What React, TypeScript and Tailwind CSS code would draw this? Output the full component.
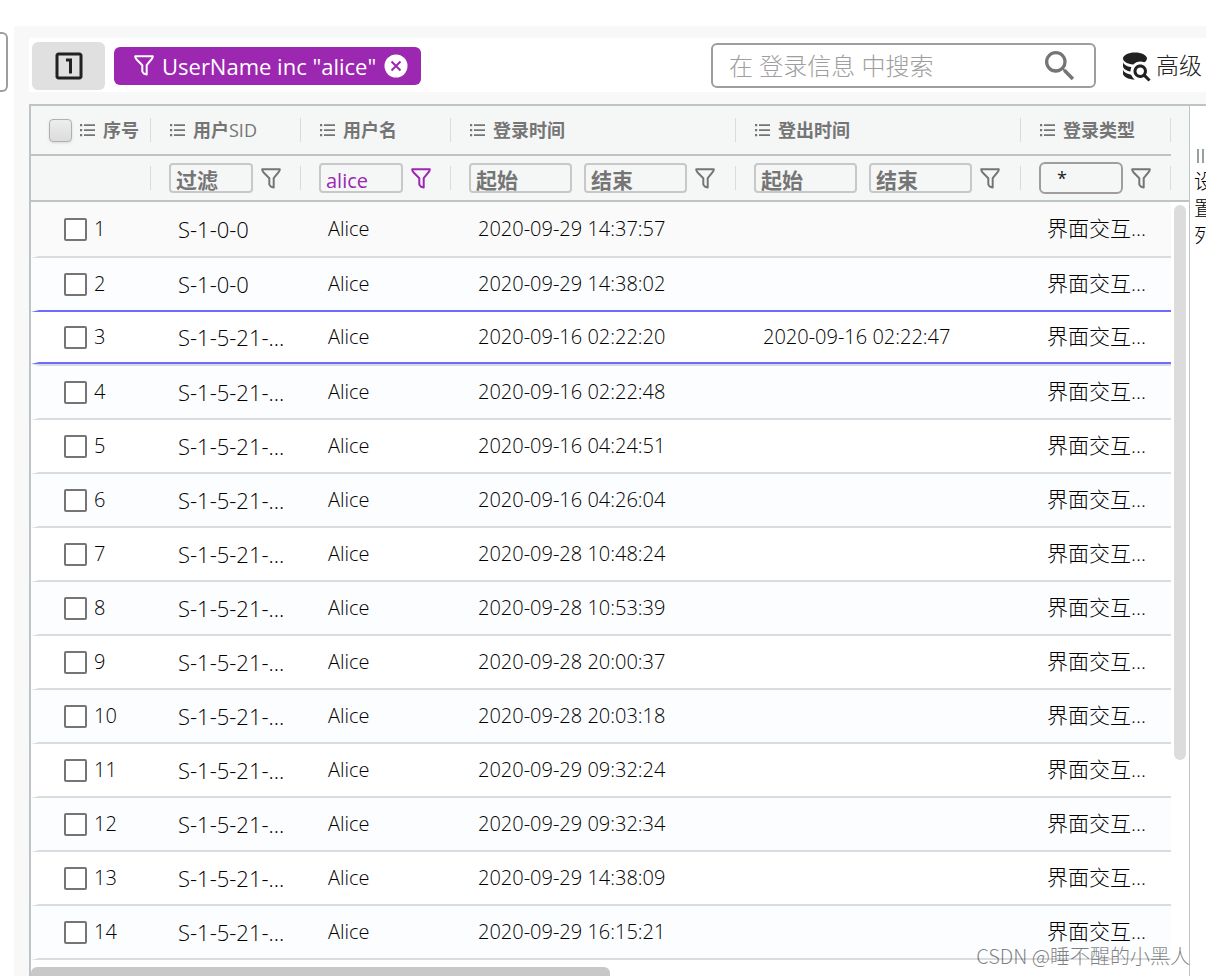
import React from 'react';
import { MdOutlineLooksOne, MdSearch } from 'react-icons/md';

interface LoginRecord {
    id: number;
    sid: string;
    login: string;
    logout?: string;
}

const LONG_SID = 'S-1-5-21-...';
const SELECTED_ID = 3;

const records: LoginRecord[] = [
    { id: 1, sid: 'S-1-0-0', login: '2020-09-29 14:37:57' },
    { id: 2, sid: 'S-1-0-0', login: '2020-09-29 14:38:02' },
    { id: 3, sid: LONG_SID, login: '2020-09-16 02:22:20', logout: '2020-09-16 02:22:47' },
    { id: 4, sid: LONG_SID, login: '2020-09-16 02:22:48' },
    { id: 5, sid: LONG_SID, login: '2020-09-16 04:24:51' },
    { id: 6, sid: LONG_SID, login: '2020-09-16 04:26:04' },
    { id: 7, sid: LONG_SID, login: '2020-09-28 10:48:24' },
    { id: 8, sid: LONG_SID, login: '2020-09-28 10:53:39' },
    { id: 9, sid: LONG_SID, login: '2020-09-28 20:00:37' },
    { id: 10, sid: LONG_SID, login: '2020-09-28 20:03:18' },
    { id: 11, sid: LONG_SID, login: '2020-09-29 09:32:24' },
    { id: 12, sid: LONG_SID, login: '2020-09-29 09:32:34' },
    { id: 13, sid: LONG_SID, login: '2020-09-29 14:38:09' },
    { id: 14, sid: LONG_SID, login: '2020-09-29 16:15:21' },
];

const FunnelIcon = () => (
    <svg viewBox="0 0 20 21" fill="none" stroke="currentColor" strokeWidth="2" strokeLinejoin="round" className="h-[21px] w-5 shrink-0">
        <path d="M1.2 1.2h17.6c0 1.4-.4 2-1.2 3L12.700 10.200v9.300l-3-1-1.400-2V10.200L2.400 4.200c-.8-1-1.200-1.600-1.200-3z" />
    </svg>
);

const ListIcon = () => (
    <svg viewBox="0 0 15 13" fill="currentColor" className="h-[13px] w-[15px] shrink-0">
        <path d="M0 0h2.200v2.200H0zM0 5h2.200v2.200H0zM0 10h2.200v2.200H0zM4 .3h11v1.600H4zM4 5.300h11v1.600H4zM4 10.300h11v1.600H4z" />
    </svg>
);

const CloseIcon = () => (
    <svg viewBox="0 0 24 24" className="size-6">
        <circle cx="12" cy="12" r="11.5" fill="#fff" />
        <path d="M7.500 7.500l9 9M16.500 7.500l-9 9" stroke="#9c27b0" strokeWidth="2" />
    </svg>
);

const DatabaseSearchIcon = () => (
    <svg viewBox="0 0 24 24" fill="currentColor" className="size-9 shrink-0">
        <path d="M18.68,12.32C16.92,10.56 14.07,10.57 12.32,12.33C10.56,14.09 10.56,16.94 12.32,18.69C13.81,20.17 16.11,20.43 17.89,19.32L21,22.39L22.39,21L19.3,17.89C20.43,16.12 20.17,13.8 18.68,12.32M17.27,17.27C16.29,18.25 14.71,18.24 13.73,17.27C12.76,16.29 12.76,14.71 13.74,13.73C14.71,12.76 16.29,12.76 17.27,13.73C18.24,14.71 18.24,16.29 17.27,17.27M10.9,20.1C10.25,19.44 9.74,18.65 9.42,17.78C6.27,17.25 4,15.76 4,14V17C4,19.21 7.58,21 12,21V21C11.6,20.74 11.23,20.44 10.9,20.1M4,9V12C4,13.68 6.07,15.12 9,15.7C9,15.63 9,15.57 9,15.5C9,14.57 9.2,13.65 9.58,12.81C6.34,12.3 4,10.79 4,9M12,3C7.58,3 4,4.79 4,7C4,9 7,10.68 10.85,11H10.9C12.1,9.74 13.76,9 15.5,9C16.41,9 17.31,9.19 18.14,9.56C19.17,9.09 19.87,8.12 20,7C20,4.79 16.42,3 12,3Z" />
    </svg>
);

const Columns = () => (
    <colgroup>
        <col className="w-[120px]" />
        <col className="w-[150px]" />
        <col className="w-[150px]" />
        <col className="w-[285px]" />
        <col className="w-[285px]" />
        <col className="w-[150px]" />
    </colgroup>
);

const HeaderCell = ({ children, first = false }: { children: React.ReactNode; first?: boolean }) => (
    <th scope="col" className="h-[50px] border-b-2 border-[#bdc3c7] p-0 text-left font-bold">
        <div className={`flex h-6 items-center gap-2 border-r border-[#d9dcde] ${first ? 'pl-[18px]' : 'pl-[19px]'}`}>{children}</div>
    </th>
);

const FilterCell = ({ children }: { children?: React.ReactNode }) => (
    <td className="h-[46px] border-b-2 border-[#bdc3c7] p-0">
        <div className="flex h-6 items-center border-r border-[#d9dcde] pl-[18px]">{children}</div>
    </td>
);

const FilterInput = ({ label, placeholder, value, wide = false }: { label: string; placeholder?: string; value?: string; wide?: boolean }) => (
    <input
        type="text"
        aria-label={label}
        placeholder={placeholder}
        defaultValue={value}
        className={`h-[30px] rounded border-2 border-[#c8c8c8] bg-transparent px-[5px] pt-1 text-xl leading-6 font-medium text-[#9c27b0] outline-none placeholder:text-[21px] placeholder:font-bold placeholder:text-[#757575] ${wide ? 'w-[103px]' : 'w-[84px]'}`}
    />
);

const FilterButton = ({ label, active = false }: { label: string; active?: boolean }) => (
    <button type="button" aria-label={label} className={`ml-2 ${active ? 'text-[#9c27b0]' : 'text-[#757575]'}`}>
        <FunnelIcon />
    </button>
);

const DateFilter = ({ label }: { label: string }) => (
    <>
        <FilterInput label={`${label} 起始`} placeholder="起始" wide />
        <div className="ml-3 flex">
            <FilterInput label={`${label} 结束`} placeholder="结束" wide />
        </div>
        <FilterButton label={`${label} 过滤`} />
    </>
);

// the selected row is outlined by its own bottom line and the one of the row above
const borderFor = (id: number) => {
    if (id === SELECTED_ID || id === SELECTED_ID - 1) return 'border-b-[#6c6cff]';
    if (id === SELECTED_ID + 1) return 'border-t-2 border-t-[#d9dcde] border-b-[#d9dcde]';
    return 'border-b-[#d9dcde]';
};

const backgroundFor = (id: number) => {
    if (id === 1) return 'bg-[#fafafa]';
    return id % 2 === 0 ? 'bg-[#fcfdff]' : 'bg-white';
};

const heightFor = (id: number) => {
    if (id === 1) return 'h-[54px]';
    return id === SELECTED_ID ? 'h-[50px]' : 'h-[52px]';
};

const RecordRow = ({ record }: { record: LoginRecord }) => {
    const cell = `border-b-2 p-0 ${borderFor(record.id)}`;
    const inner = `flex items-center ${heightFor(record.id)}`;

    return (
        <tr className={backgroundFor(record.id)}>
            <td className={`${cell} border-l-8 border-l-transparent`}>
                <label className={`${inner} gap-[7px] pl-[25px]`}>
                    <input type="checkbox" className="size-[23px] shrink-0 appearance-none rounded-[2px] border-2 border-[#757575] bg-white" />
                    {record.id}
                </label>
            </td>
            <td className={cell}>
                <div className={`${inner} pl-[27px] text-[22px]`}>{record.sid}</div>
            </td>
            <td className={cell}>
                <div className={`${inner} pl-[27px]`}>Alice</div>
            </td>
            <td className={cell}>
                <div className={`${inner} pl-[27px]`}>{record.login}</div>
            </td>
            <td className={cell}>
                <div className={`${inner} pl-[27px]`}>{record.logout}</div>
            </td>
            <td className={cell}>
                <div className={`${inner} pl-[26px] text-[21px]`}>界面交互...</div>
            </td>
        </tr>
    );
};

const Toolbar = () => (
    <div className="flex h-[54px] items-center bg-white pt-px pl-[3px]">
        <button type="button" aria-label="1" className="flex h-12 w-[73px] items-center justify-center rounded-md bg-[#e0e0e0] text-[#212121]">
            <MdOutlineLooksOne size={36} />
        </button>
        <div className="ml-[9px] flex h-[38px] items-center rounded-md bg-[#9c27b0] pr-[13px] pl-5 text-[22px] leading-8 font-medium text-white">
            <FunnelIcon />
            <span className="ml-2 whitespace-nowrap">UserName inc "alice"</span>
            <button type="button" aria-label="清除" className="ml-2">
                <CloseIcon />
            </button>
        </div>
        <div className="ml-auto flex h-[45px] w-[385px] items-center rounded-md border-2 border-[#9e9e9e] pr-[14px] pl-4">
            <input
                type="search"
                aria-label="搜索"
                placeholder="在 登录信息 中搜索"
                className="min-w-0 flex-1 bg-transparent text-2xl font-light outline-none placeholder:text-[#9e9e9e]"
            />
            <MdSearch size={40} className="shrink-0 text-[#757575]" />
        </div>
        <button type="button" className="ml-[21px] flex items-center text-[23px] whitespace-nowrap text-[#212121]">
            <DatabaseSearchIcon />
            <span className="ml-[3px] pr-1">高级</span>
        </button>
    </div>
);

const App: React.FC = () => {
    return (
        <div className="relative flex h-screen overflow-hidden bg-white font-['Open_Sans','Noto_Sans_CJK_SC',sans-serif] text-xl font-light text-black">
            <aside className="w-[14px] shrink-0 pt-8">
                <div className="h-[60px] w-2 rounded-r-md border-2 border-l-0 border-[#9e9e9e]" />
            </aside>

            <main className="mt-[26px] flex min-w-0 flex-1 flex-col bg-[#f8f8f8] pt-3 pl-[15px]">
                <Toolbar />

                <div className="mt-3 flex min-h-0 flex-1 border-t-2 border-l-2 border-[#bdc3c7] bg-white">
                    <div className="flex min-w-0 flex-1 flex-col border-r border-[#bdc3c7]">
                        <div className="min-h-0 flex-1 overflow-hidden">
                            <div className="flex bg-[#f5f7f7]">
                                <table className="min-w-0 flex-1 table-fixed border-separate border-spacing-0">
                                    <Columns />
                                    <thead className="text-lg text-[#757575]">
                                        <tr>
                                            <HeaderCell first>
                                                <input
                                                    type="checkbox"
                                                    aria-label="全选"
                                                    className="size-[23px] shrink-0 appearance-none rounded border border-[#b0b0b0] bg-linear-to-b from-[#ededed] to-[#dcdcdc] shadow-sm"
                                                />
                                                <ListIcon />
                                                <span className="whitespace-nowrap">序号</span>
                                            </HeaderCell>
                                            <HeaderCell>
                                                <ListIcon />
                                                <span>
                                                    用户<span className="font-normal">SID</span>
                                                </span>
                                            </HeaderCell>
                                            <HeaderCell>
                                                <ListIcon />
                                                用户名
                                            </HeaderCell>
                                            <HeaderCell>
                                                <ListIcon />
                                                登录时间
                                            </HeaderCell>
                                            <HeaderCell>
                                                <ListIcon />
                                                登出时间
                                            </HeaderCell>
                                            <HeaderCell>
                                                <ListIcon />
                                                登录类型
                                            </HeaderCell>
                                        </tr>
                                        <tr>
                                            <FilterCell />
                                            <FilterCell>
                                                <FilterInput label="用户SID" placeholder="过滤" />
                                                <FilterButton label="用户SID 过滤" />
                                            </FilterCell>
                                            <FilterCell>
                                                <FilterInput label="用户名" value="alice" />
                                                <FilterButton label="用户名 过滤" active />
                                            </FilterCell>
                                            <FilterCell>
                                                <DateFilter label="登录时间" />
                                            </FilterCell>
                                            <FilterCell>
                                                <DateFilter label="登出时间" />
                                            </FilterCell>
                                            <FilterCell>
                                                <select aria-label="登录类型" className="h-8 w-[84px] appearance-none rounded-md border-2 border-[#9e9e9e] bg-transparent pl-4 text-lg font-normal text-[#212121]">
                                                    <option>*</option>
                                                </select>
                                                <FilterButton label="登录类型 过滤" />
                                            </FilterCell>
                                        </tr>
                                    </thead>
                                </table>
                                <div className="w-[18px] border-b-2 border-[#bdc3c7]" />
                            </div>

                            <div className="flex">
                                <table className="min-w-0 flex-1 table-fixed border-separate border-spacing-0">
                                    <Columns />
                                    <tbody>
                                        {records.map((record) => (
                                            <RecordRow key={record.id} record={record} />
                                        ))}
                                    </tbody>
                                </table>
                                <div className="w-[18px] pt-[3px] pl-[3px]">
                                    <div className="h-[555px] w-3 rounded-full bg-[#dcdcdc]" />
                                </div>
                            </div>
                        </div>
                        <div className="h-[9px] shrink-0">
                            <div className="h-full w-1/2 rounded-t-md bg-[#c8c8c8]" />
                        </div>
                    </div>

                    <button type="button" className="flex w-4 shrink-0 flex-col items-start overflow-hidden pt-[43px] pl-1 text-left">
                        <svg viewBox="0 0 16 14" className="ml-[2px] h-[14px] w-4 shrink-0" fill="none" stroke="#95a0a2">
                            <path d="M2 0v14M7 0v14M12 0v14" strokeWidth="2" />
                        </svg>
                        <span className="mt-[5px] w-5 text-xl leading-[27px]">设置列</span>
                    </button>
                </div>
            </main>

            <p className="absolute right-4 bottom-2 text-xl leading-6 text-black/50 font-['Noto_Sans_CJK_SC',sans-serif]">CSDN @睡不醒的小黑人</p>
        </div>
    );
};

export default App;
